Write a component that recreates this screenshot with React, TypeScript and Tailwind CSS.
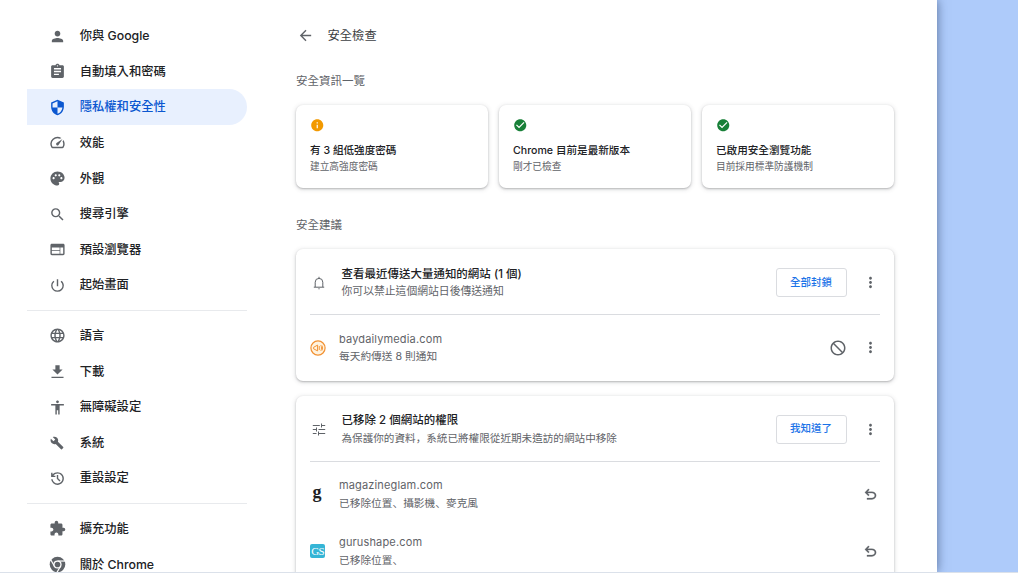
import type { ReactNode } from "react";
import type { IconType } from "react-icons";
import {
  MdAccessibility,
  MdArrowBack,
  MdAssignment,
  MdBlock,
  MdBuild,
  MdCheckCircle,
  MdExtension,
  MdInfo,
  MdLanguage,
  MdMoreVert,
  MdOutlineSpeed,
  MdPalette,
  MdPerson,
  MdPowerSettingsNew,
  MdSearch,
  MdSecurity,
  MdWeb,
} from "react-icons/md";

function ChromeGlyph({ className }: { className?: string }) {
  return (
    <svg viewBox="0 0 24 24" className={className}>
      <circle cx="12" cy="12" r="11" fill="currentColor" />
      <circle cx="12" cy="12" r="5.8" fill="#fff" />
      <g stroke="#fff" strokeWidth="1.7">
        <path d="M12 7.1H23" />
        <path d="M12 7.1H23" transform="rotate(120 12 12)" />
        <path d="M12 7.1H23" transform="rotate(240 12 12)" />
      </g>
      <circle cx="12" cy="12" r="4" fill="currentColor" />
    </svg>
  );
}

function DownloadGlyph({ className }: { className?: string }) {
  return (
    <svg viewBox="0 0 24 24" className={className} fill="currentColor">
      <path d="M19.2 9H15V3H9v6H4.8L12 16.2ZM3.5 19.5v1.8h17v-1.8Z" />
    </svg>
  );
}

function HistoryGlyph({ className }: { className?: string }) {
  return (
    <svg viewBox="0 -960 960 960" className={className} fill="currentColor">
      <path d="M480-120q-138 0-240.5-91.5T122-440h82q14 104 92.500 172T480-200q117 0 198.500-81.500T760-480q0-117-81.500-198.500T480-760q-69 0-129 32t-101 88h110v80H120v-240h80v94q51-64 124.500-99T480-840q75 0 140.500 28.500t114 77q48.500 48.500 77 114T840-480q0 75-28.500 140.500t-77 114q-48.500 48.500-114 77T480-120Zm112-192L440-464v-216h80v184l128 128-56 56Z" />
    </svg>
  );
}

function BuildGlyph({ className }: { className?: string }) {
  return (
    <span className={`flex items-center justify-center ${className ?? ""}`}>
      <MdBuild className="size-[14px]" />
    </span>
  );
}

function BellGlyph() {
  return (
    <svg viewBox="0 0 16 16" className="size-4" fill="none" stroke="currentColor" strokeWidth="1">
      <path d="M2.8 12.2h10.4M4.2 12V7.2a3.8 3.8 0 0 1 7.6 0V12M8 3.3V1.8" />
      <path d="M6.8 13.5h2.4l-1.2 1.1Z" fill="currentColor" stroke="none" />
    </svg>
  );
}

function TuneGlyph() {
  return (
    <svg viewBox="0 0 16 16" className="size-4" fill="none" stroke="currentColor" strokeWidth="1">
      <path d="M1.8 4.5h7M10.5 4.5h3.7M10.5 2.5v4M1.8 8.5h3.7M7.5 8.5h6.7M5.5 6.5v4M1.8 12.5h3.7M7.5 12.5h6.7M7.5 10.5v4" />
    </svg>
  );
}

function UndoGlyph() {
  return (
    <svg viewBox="0 -960 960 960" className="size-[17px] fill-current stroke-current stroke-[14]">
      <path d="M280-200v-80h284q63 0 109.5-40T720-420q0-60-46.5-100T564-560H312l104 104-56 56-200-200 200-200 56 56-104 104h252q97 0 169.5 63T800-420q0 94-72.5 157T564-200H280Z" />
    </svg>
  );
}

function SpeakerLogo() {
  return (
    <svg viewBox="0 0 16 16" className="-ml-[0.5px] size-4" fill="none" stroke="#f29132">
      <circle cx="8" cy="8" r="7.1" fill="#fff3df" strokeWidth="1.2" />
      <path d="M7.6 5.1 3.6 7.3v1.5l4 2.1Z" strokeWidth="1" />
      <path d="M9.3 6v4M10.8 5.2c1 1.7 1 3.9 0 5.6M12.1 5.6c.6 1.5.6 3.3 0 4.8" strokeWidth=".9" />
    </svg>
  );
}

type NavItem = { label: string; icon: IconType | typeof ChromeGlyph; active?: boolean };

const groups: NavItem[][] = [
  [
    { label: "你與 Google", icon: MdPerson },
    { label: "自動填入和密碼", icon: MdAssignment },
    { label: "隱私權和安全性", icon: MdSecurity, active: true },
    { label: "效能", icon: MdOutlineSpeed },
    { label: "外觀", icon: MdPalette },
    { label: "搜尋引擎", icon: MdSearch },
    { label: "預設瀏覽器", icon: MdWeb },
    { label: "起始畫面", icon: MdPowerSettingsNew },
  ],
  [
    { label: "語言", icon: MdLanguage },
    { label: "下載", icon: DownloadGlyph },
    { label: "無障礙設定", icon: MdAccessibility },
    { label: "系統", icon: BuildGlyph },
    { label: "重設設定", icon: HistoryGlyph },
  ],
  [
    { label: "擴充功能", icon: MdExtension },
    { label: "關於 Chrome", icon: ChromeGlyph },
  ],
];

const cardStyle =
  "rounded-[7px] bg-white shadow-[0_1px_2px_rgba(60,64,67,0.3),0_1px_4px_1px_rgba(60,64,67,0.13)]";

function Sidebar() {
  return (
    <nav className="w-[220px] shrink-0 pt-[18.3px]">
      {groups.map((items, i) => (
        <div key={i} className={i > 0 ? "mt-[7px] border-t border-[#e8eaed] pt-[7px]" : ""}>
          {items.map(({ label, icon: Icon, active }) => (
            <a
              key={label}
              className={`flex h-[35.6px] items-center gap-[14.2px] rounded-r-full pl-[21.5px] text-[12.3px] font-medium ${
                active ? "bg-[#e8f0fe] text-[#0b57d0]" : "text-[#202124]"
              }`}
            >
              <Icon className={`size-[17px] shrink-0 ${active ? "text-[#0b57d0]" : "text-[#5f6368]"}`} />
              <span className="pt-[0.8px]">{label}</span>
            </a>
          ))}
        </div>
      ))}
    </nav>
  );
}

function StatusCard({ warn, title, detail }: { warn?: boolean; title: string; detail: string }) {
  return (
    <div className={`h-[83px] flex-1 pt-[13px] pl-[14px] ${cardStyle}`}>
      {warn ? (
        <MdInfo className="-ml-[0.4px] size-[14.5px] text-[#f29900]" />
      ) : (
        <MdCheckCircle className="-ml-[0.4px] size-[14.5px] text-[#188038]" />
      )}
      <div className="mt-[9px] text-[10.6px] leading-[17px] font-medium text-[#202124]">{title}</div>
      <div className="text-[9.7px] leading-4 text-[#5f6368]">{detail}</div>
    </div>
  );
}

function CardHeader({
  icon,
  title,
  detail,
  action,
  detailSize,
}: {
  icon: ReactNode;
  title: string;
  detail: ReactNode;
  action: string;
  detailSize: string;
}) {
  return (
    <div className="mx-[14px] flex h-[66px] items-center border-b border-[#dadce0] pt-[2px] text-[#5f6368]">
      <div className="flex w-[31.5px] pl-[1px]">{icon}</div>
      <div className="flex-1">
        <div className="text-[11.45px] leading-[18px] font-medium tracking-[0.05px] text-[#202124]">
          {title}
        </div>
        <div className={`leading-[18px] ${detailSize}`}>{detail}</div>
      </div>
      <button className="h-[29px] w-[71px] rounded-[3px] border border-[#dadce0] text-[10.5px] font-medium text-[#1a73e8]">
        {action}
      </button>
      <MdMoreVert className="mr-[1px] ml-[15px] size-[17px]" />
    </div>
  );
}

function SiteRow({
  logo,
  site,
  detail,
  children,
}: {
  logo: ReactNode;
  site: string;
  detail: ReactNode;
  children: ReactNode;
}) {
  return (
    <div className="mx-[14px] flex h-[57px] items-center text-[#5f6368]">
      <div className="flex w-[29px]">{logo}</div>
      <div className="flex-1">
        <div className="text-[11px] leading-[18px] tracking-[0.15px]">{site}</div>
        <div className="text-[10.7px] leading-[18px]">{detail}</div>
      </div>
      <div className="mr-[1px] flex items-center gap-[15px]">{children}</div>
    </div>
  );
}

function Punct({ children }: { children: string }) {
  return (
    <span lang="zh-Hans" className="font-['Noto_Sans_CJK_SC',sans-serif]">
      {children}
    </span>
  );
}

export default function App() {
  return (
    <div
      lang="zh-Hant"
      className="flex h-[573px] w-[1018px] flex-col overflow-hidden bg-[#aecbfa] font-['Inter','Noto_Sans_CJK_TC',sans-serif]"
    >
      <div className="flex h-[572px] w-[937px] overflow-hidden bg-white pl-[27px] shadow-[0_0_10px_rgba(40,60,100,0.65)]">
        <Sidebar />
        <main className="ml-[49px] w-[597.5px] shrink-0">
          <header className="flex h-[71px] items-center gap-[14px] text-[12.3px] text-[#3c4043]">
            <MdArrowBack className="ml-[0.5px] size-[17px] text-[#5f6368]" />
            <h1 className="pt-[0.5px]">安全檢查</h1>
          </header>
          <h2 className="h-[34px] text-[11.5px] leading-[21px] text-[#5f6368]">安全資訊一覽</h2>
          <section className="flex gap-[11.5px]">
            <StatusCard warn title="有 3 組低強度密碼" detail="建立高強度密碼" />
            <StatusCard title="Chrome 目前是最新版本" detail="剛才已檢查" />
            <StatusCard title="已啟用安全瀏覽功能" detail="目前採用標準防護機制" />
          </section>
          <h2 className="mt-[27px] h-[34px] text-[11.5px] leading-[21px] text-[#5f6368]">安全建議</h2>
          <section className={`h-[132px] ${cardStyle}`}>
            <CardHeader
              icon={<BellGlyph />}
              title="查看最近傳送大量通知的網站 (1 個)"
              detail="你可以禁止這個網站日後傳送通知"
              detailSize="text-[10.82px]"
              action="全部封鎖"
            />
            <div className="pt-[4px]">
              <SiteRow logo={<SpeakerLogo />} site="baydailymedia.com" detail="每天約傳送 8 則通知">
                <MdBlock className="size-[18px] -scale-x-100" />
                <MdMoreVert className="size-[17px]" />
              </SiteRow>
            </div>
          </section>
          <section className={`mt-[14.5px] h-[220px] ${cardStyle}`}>
            <CardHeader
              icon={<TuneGlyph />}
              title="已移除 2 個網站的權限"
              detail={
                <>
                  為保護你的資料<Punct>，</Punct>系統已將權限從近期未造訪的網站中移除
                </>
              }
              detailSize="text-[10.6px]"
              action="我知道了"
            />
            <div className="pt-[4px]">
              <SiteRow
                logo={
                  <span className="w-[14px] pb-1 text-center font-['Liberation_Serif',serif] text-[18px] leading-4 font-bold text-[#202124]">
                    g
                  </span>
                }
                site="magazineglam.com"
                detail={
                  <>
                    已移除位置<Punct>、</Punct>攝影機<Punct>、</Punct>麥克風
                  </>
                }
              >
                <UndoGlyph />
              </SiteRow>
              <SiteRow
                logo={
                  <span className="flex h-[14px] w-[15px] items-center justify-center rounded-[2px] bg-[#35b5d6] font-['Liberation_Serif',serif] text-[11px] tracking-[-0.8px] text-white">
                    GS
                  </span>
                }
                site="gurushape.com"
                detail={
                  <>
                    已移除位置<Punct>、</Punct>
                  </>
                }
              >
                <UndoGlyph />
              </SiteRow>
            </div>
          </section>
        </main>
      </div>
      <div className="h-px w-full bg-[#dbe1ea]" />
    </div>
  );
}
